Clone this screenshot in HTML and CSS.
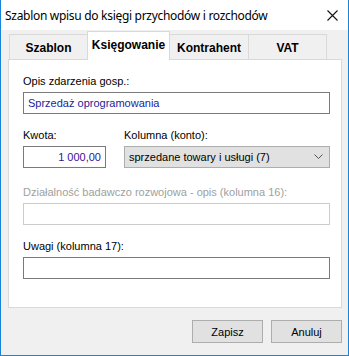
FILE: index.html
```html
<!DOCTYPE html>
<html lang="pl">
<head>
<meta charset="UTF-8">
<title>Szablon wpisu</title>
<link rel="stylesheet" href="styles.css">
</head>
<body>
<div class="win">
  <div class="titlebar">
    <span class="title">Szablon wpisu do księgi przychodów i rozchodów</span>
    <svg class="close" width="11" height="11" viewBox="0 0 11 11"><path d="M0.5 0.5L10.5 10.5M10.5 0.5L0.5 10.5" stroke="#111" stroke-width="1.1" fill="none"/></svg>
  </div>

  <div class="client">
    <!-- tabs -->
    <div class="tabs">
      <div class="tab t1">Szablon</div>
      <div class="tab sel">Księgowanie</div>
      <div class="tab t3">Kontrahent</div>
      <div class="tab t4">VAT</div>
    </div>

    <div class="panel">
      <label class="lbl">Opis zdarzenia gosp.:</label>
      <div class="edit opis">Sprzedaż oprogramowania</div>

      <div class="row">
        <div class="col">
          <label class="lbl">Kwota:</label>
          <div class="edit kwota">1 000,00</div>
        </div>
        <div class="col grow">
          <label class="lbl">Kolumna (konto):</label>
          <div class="combo">
            <span>sprzedane towary i usługi (7)</span>
            <svg width="9" height="6" viewBox="0 0 9 6"><path d="M0.5 0.5L4.5 4.5L8.5 0.5" stroke="#555" stroke-width="1" fill="none"/></svg>
          </div>
        </div>
      </div>

      <label class="lbl dis">Działalność badawczo rozwojowa - opis (kolumna 16):</label>
      <div class="edit off"></div>

      <label class="lbl uw">Uwagi (kolumna 17):</label>
      <div class="edit"></div>
    </div>

    <div class="buttons">
      <button class="btn">Zapisz</button>
      <button class="btn">Anuluj</button>
    </div>
  </div>
</div>
</body>
</html>
```

FILE: styles.css
```css
body{margin:0;background:#f0f0f0;font-family:"Liberation Sans",Arial,sans-serif;font-size:11px;color:#000}
.win{width:349px;height:356px;box-sizing:border-box;border:1px solid #1883d7;border-top:none;background:#f0f0f0;display:flex;flex-direction:column}
.titlebar{height:30px;background:#fff;display:flex;align-items:center;justify-content:space-between;padding:0 10px 0 4px;flex:none}
.title{font-family:"Noto Sans","Open Sans",sans-serif;font-size:12px;letter-spacing:-0.3px;color:#000}
.close{display:block}
/* tabs */
.client{padding:1px 6px 0 7px;flex:1;display:flex;flex-direction:column}
.tabs{display:flex;align-items:flex-end;height:28px;padding-left:1px}
.tab{box-sizing:border-box;height:25px;border:1px solid #d9d9d9;border-bottom:none;border-right:none;
     font-weight:bold;font-size:12px;display:flex;align-items:center;justify-content:center;padding-top:2px}
.t1{width:78px}
.t3{width:78px}
.t4{width:79px;border-right:1px solid #d9d9d9}
.tab.sel{width:83px;height:29px;background:#fff;margin-bottom:-1px;position:relative;z-index:1;
         border-right:1px solid #d9d9d9;padding-top:0;padding-bottom:2px}
.tab.sel + .tab{border-left:none}
.panel{height:249px;box-sizing:border-box;background:#fff;border:1px solid #d9d9d9;padding:14px 11px 0 14px;
       display:flex;flex-direction:column}
/* fields */
.lbl{display:block;height:14px;line-height:14px;margin-bottom:4px}
.lbl.dis{color:#a0a0a0;margin-top:17px}
.lbl.uw{margin-top:14px}
.edit{box-sizing:border-box;height:22px;border:1px solid #7a7a7a;background:#fff;padding:0 4px;line-height:20px;color:#1d1d9a}
.edit.off{border-color:#cccccc}
.row{display:flex;gap:18px;margin-top:14px}
.col{display:flex;flex-direction:column}
.grow{flex:1}
.kwota{width:83px;text-align:right;color:#3a1097}
.combo{box-sizing:border-box;height:22px;border:1px solid #adadad;background:#e1e1e1;display:flex;align-items:center;
       justify-content:space-between;padding:0 6px 0 4px}
/* buttons */
.buttons{display:flex;justify-content:flex-end;gap:8px;margin-top:12px}
.btn{width:71px;height:23px;border:1px solid #adadad;background:#e1e1e1;font-family:"Liberation Sans",Arial,sans-serif;font-size:11px;color:#000;padding:0}
```
